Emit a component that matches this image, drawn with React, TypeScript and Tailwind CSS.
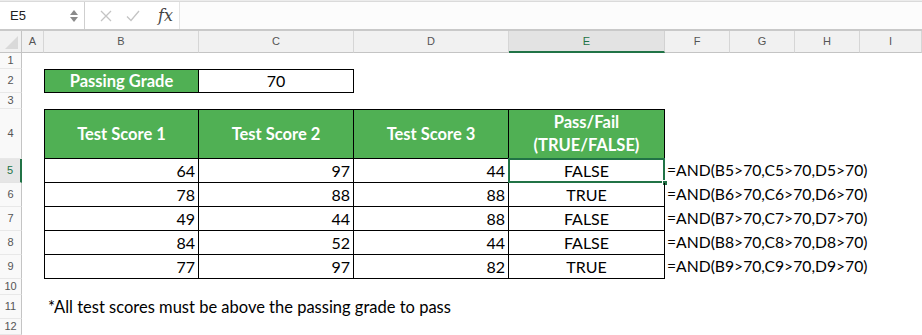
import React from "react";

const COLS = ["A", "B", "C", "D", "E", "F", "G", "H", "I"];

const scores: [number, number, number, string][] = [
  [64, 97, 44, "FALSE"],
  [78, 88, 88, "TRUE"],
  [49, 44, 88, "FALSE"],
  [84, 52, 44, "FALSE"],
  [77, 97, 82, "TRUE"],
];

function FormulaBar() {
  return (
    <div className="h-[31px] flex flex-col bg-white">
      <div className="h-[2px] bg-[#ececec] border-b border-[#dadada]" />
      <div className="flex-1 flex items-stretch">
        <div className="w-[85px] flex items-center justify-between pl-[10px] pr-[6px] border-r border-[#cfcfcf] font-['Liberation_Sans',sans-serif] text-[13px] text-[#222]">
          <span>E5</span>
          <span className="flex flex-col items-center gap-[2px]">
            <svg width="8" height="5" viewBox="0 0 8 5"><path d="M4 0 L8 5 L0 5 Z" fill="#8a8a8a" /></svg>
            <svg width="8" height="5" viewBox="0 0 8 5"><path d="M0 0 L8 0 L4 5 Z" fill="#8a8a8a" /></svg>
          </span>
        </div>
        <div className="w-[95px] flex items-center border-r border-[#e4e4e4] relative">
          <svg className="ml-[15px]" width="12" height="12" viewBox="0 0 12 12">
            <path d="M1 1 L11 11 M11 1 L1 11" stroke="#c4c4c4" strokeWidth="1.3" fill="none" />
          </svg>
          <svg className="ml-[14px]" width="14" height="12" viewBox="0 0 14 12">
            <path d="M1 6.5 L5 10.5 L13 1" stroke="#c4c4c4" strokeWidth="1.3" fill="none" />
          </svg>
          <span className="ml-[18px] font-['DejaVu_Serif',serif] italic text-[16px] text-[#444] leading-none">
            fx
          </span>
        </div>
        <div className="flex-1 bg-[#fcfcfc]" />
      </div>
      <div className="h-[2px] border-t border-b border-[#c9c9c9] bg-white" />
    </div>
  );
}

function ColHeader({ label }: { label: string }) {
  const sel = label === "E";
  return (
    <div
      className={
        sel
          ? "flex items-center justify-center bg-[#e3e3e3] border-r border-[#d2d2d2] border-b-2 border-b-[#217346] text-[#217346] text-[11px] font-['Liberation_Sans',sans-serif]"
          : "flex items-center justify-center bg-[#f1f1f1] border-r border-[#d6d6d6] border-b border-b-[#c4c4c4] text-[#555] text-[11px] font-['Liberation_Sans',sans-serif]"
      }
    >
      {label}
    </div>
  );
}

function RowHeader({ n }: { n: number }) {
  const sel = n === 5;
  return (
    <div
      className={
        sel
          ? "flex items-center justify-center bg-[#e6e6e6] border-r-2 border-[#217346] border-b border-b-[#e4e4e4] text-[#217346] text-[11px] font-['Liberation_Sans',sans-serif]"
          : "flex items-center justify-center bg-[#f9f9f9] border-r border-[#c4c4c4] border-b border-b-[#e8e8e8] text-[#555] text-[11px] font-['Liberation_Sans',sans-serif]"
      }
    >
      {n}
    </div>
  );
}

export default function App() {
  const rows: React.ReactNode[] = [];

  rows.push(
    <div key="corner" className="bg-[#f1f1f1] border-r border-[#c4c4c4] border-b border-b-[#c4c4c4] relative">
      <svg className="absolute right-[3px] bottom-[3px]" width="13" height="13" viewBox="0 0 13 13">
        <path d="M13 0 L13 13 L0 13 Z" fill="#d9d9d9" />
      </svg>
    </div>
  );
  COLS.forEach((c) => rows.push(<ColHeader key={"h" + c} label={c} />));

  for (let r = 1; r <= 12; r++) {
    rows.push(<RowHeader key={"r" + r} n={r} />);
    for (let ci = 0; ci < 9; ci++) {
      const key = `c${r}-${ci}`;
      let node: React.ReactNode = <div key={key} />;

      if (r === 2 && ci === 1) {
        node = (
          <div key={key} className="flex items-center justify-center bg-[#50b054] border border-black text-white font-bold text-[16.5px]">
            Passing Grade
          </div>
        );
      } else if (r === 2 && ci === 2) {
        node = (
          <div key={key} className="flex items-center justify-center border-t border-r border-b border-black text-[16px] text-black">
            70
          </div>
        );
      } else if (r === 4 && ci >= 1 && ci <= 4) {
        const labels = ["Test Score 1", "Test Score 2", "Test Score 3"];
        node = (
          <div
            key={key}
            className={
              ci === 1
                ? "flex items-center justify-center bg-[#50b054] border border-black text-white font-bold text-[16.5px] leading-[23px] text-center"
                : "flex items-center justify-center bg-[#50b054] border-t border-r border-b border-black text-white font-bold text-[16.5px] leading-[23px] text-center"
            }
          >
            {ci === 4 ? (
              <span>
                Pass/Fail
                <br />
                (TRUE/FALSE)
              </span>
            ) : (
              labels[ci - 1]
            )}
          </div>
        );
      } else if (r >= 5 && r <= 9 && ci >= 1 && ci <= 4) {
        const d = scores[r - 5];
        if (ci === 4) {
          node = (
            <div key={key} className="relative flex items-center justify-center border-r border-b border-black text-[16px] text-black">
              {d[3]}
              {r === 5 && (
                <>
                  <div className="absolute -top-[1px] -left-[1px] -right-[1px] -bottom-[1px] border-2 border-[#217346] pointer-events-none" />
                  <div className="absolute -right-[4px] -bottom-[4px] w-[6px] h-[6px] bg-[#217346] border border-white" />
                </>
              )}
            </div>
          );
        } else {
          node = (
            <div
              key={key}
              className={
                ci === 1
                  ? "flex items-center justify-end pr-[3px] border-l border-r border-b border-black text-[16px] text-black"
                  : "flex items-center justify-end pr-[3px] border-r border-b border-black text-[16px] text-black"
              }
            >
              {d[ci - 1]}
            </div>
          );
        }
      } else if (r >= 5 && r <= 9 && ci === 5) {
        node = (
          <div key={key} className="flex items-center pl-[2px] whitespace-nowrap overflow-visible text-[15.7px] text-black relative z-10">
            {`=AND(B${r}>70,C${r}>70,D${r}>70)`}
          </div>
        );
      } else if (r === 11 && ci === 1) {
        node = (
          <div key={key} className="flex items-center pl-[4px] whitespace-nowrap overflow-visible text-[16.5px] text-black">
            *All test scores must be above the passing grade to pass
          </div>
        );
      }
      rows.push(node);
    }
  }

  return (
    <div className="w-[922px] h-[335px] overflow-hidden bg-white font-['Lato',sans-serif]">
      <FormulaBar />
      <div className="grid grid-cols-[22px_22px_155px_155px_155px_156px_65px_65px_65px_1fr] grid-rows-[22px_16px_24px_16px_50px_24px_24px_24px_24px_24px_16px_24px_16px]">
        {rows}
      </div>
    </div>
  );
}
